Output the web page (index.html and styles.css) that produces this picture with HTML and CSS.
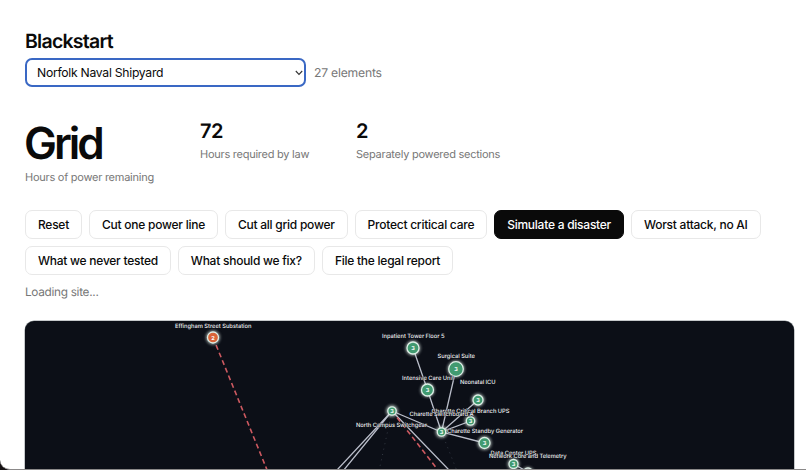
FILE: index.html
```html
<!DOCTYPE html>
<html lang="en">
<head>
  <meta charset="UTF-8" />
  <meta name="viewport" content="width=device-width, initial-scale=1.0"/>
  <title>Blackstart</title>
  <link rel="stylesheet" href="styles.css">
</head>
<body>
  <main class="page">
    <h1>Blackstart</h1>
    <div class="site-row">
      <div class="select-wrap">
        <select class="site-select" aria-label="Site">
          <option>Norfolk Naval Shipyard</option>
        </select>
        <svg class="chevron" viewBox="0 0 8 6"><path d="M.8 1 4 4.400 7.200 1"/></svg>
      </div>
      <span class="count">27 elements</span>
    </div>

    <div class="stats">
      <div class="stat hero">
        <div class="value">Grid</div>
        <div class="label">Hours of power remaining</div>
      </div>
      <div class="stat law">
        <div class="value">72</div>
        <div class="label">Hours required by law</div>
      </div>
      <div class="stat">
        <div class="value">2</div>
        <div class="label">Separately powered sections</div>
      </div>
    </div>

    <div class="actions">
      <button>Reset</button>
      <button>Cut one power line</button>
      <button>Cut all grid power</button>
      <button>Protect critical care</button>
      <button class="primary">Simulate a disaster</button>
      <button>Worst attack, no AI</button>
      <button>What we never tested</button>
      <button>What should we fix?</button>
      <button>File the legal report</button>
    </div>
    <p class="status">Loading site...</p>

    <div class="graph">
      <svg viewBox="25 321 769 149" width="769" height="149">
        <defs>
          <filter id="glow" x="-60%" y="-60%" width="220%" height="220%">
            <feGaussianBlur stdDeviation="1.5"/>
          </filter>
        </defs>
        <g class="link">
          <path d="M413 348 427.500 390 441.500 432 456 369"/>
          <path d="M392 411 441.500 432 478 400"/>
          <path d="M470.500 421 441.500 432 484.500 443"/>
          <path d="M392 411 337 470M392 411 343 471M392 411 449 470"/>
          <path d="M513.500 464 528 472"/>
        </g>
        <path class="cut" d="M213 337.500 267.500 471"/>
        <path class="cut" d="M392 411 438 470"/>
        <path class="dots" d="M392 411 379 471M441.500 432 457 471"/>

        <g class="halo" filter="url(#glow)">
          <circle cx="213" cy="337.500" r="7"/>
          <circle cx="413" cy="348" r="7.500"/>
          <circle cx="456" cy="369" r="8.500"/>
          <circle cx="427.500" cy="390" r="7"/>
          <circle cx="478" cy="400" r="6.500"/>
          <circle cx="392" cy="411" r="6"/>
          <circle cx="470.500" cy="421" r="6"/>
          <circle cx="441.500" cy="432" r="6"/>
          <circle cx="484.500" cy="443" r="7"/>
          <circle cx="513.500" cy="464" r="6"/>
          <circle cx="528" cy="473" r="6"/>
        </g>
        <g class="node">
          <circle class="hit" cx="213" cy="337.500" r="5.500"/>
          <circle cx="413" cy="348" r="6"/>
          <circle cx="456" cy="369" r="7.300"/>
          <circle cx="427.500" cy="390" r="6"/>
          <circle cx="478" cy="400" r="5"/>
          <circle cx="392" cy="411" r="4.200"/>
          <circle cx="470.500" cy="421" r="4.200"/>
          <circle cx="441.500" cy="432" r="4.200"/>
          <circle cx="484.500" cy="443" r="5.500"/>
          <circle cx="513.500" cy="464" r="4.500"/>
          <circle class="idle" cx="528" cy="473" r="5"/>
        </g>
        <g class="num">
          <text x="213" y="339.500">2</text>
          <text x="413" y="350">3</text>
          <text x="456" y="371">3</text>
          <text x="427.500" y="392">3</text>
          <text x="478" y="402">3</text>
          <text x="392" y="413">3</text>
          <text x="470.500" y="423">3</text>
          <text x="441.500" y="434">3</text>
          <text x="484.500" y="445">3</text>
          <text x="513.500" y="466">3</text>
        </g>
        <g class="name">
          <text x="175" y="327.500" textLength="76.500">Effingham Street Substation</text>
          <text x="382" y="337.500" textLength="62.500">Inpatient Tower Floor 5</text>
          <text x="437.500" y="357.500" textLength="37.500">Surgical Suite</text>
          <text x="402" y="379.700" textLength="52">Intensive Care Unit</text>
          <text x="460" y="383.700" textLength="35.500">Neonatal ICU</text>
          <text x="431.500" y="412.700" textLength="78">Charette Critical Branch UPS</text>
          <text x="409.500" y="416" textLength="64">Charette Switchboard A</text>
          <text x="356" y="427" textLength="71">North Campus Switchgear</text>
          <text x="447" y="433.300" textLength="76">Charette Standby Generator</text>
          <text x="490.500" y="455" textLength="46">Data Center UPS</text>
          <text x="489" y="457.700" textLength="77.500">Network Core and Telemetry</text>
        </g>
      </svg>
    </div>
  </main>
</body>
</html>
```
FILE: styles.css
```css
* { box-sizing: border-box; }
html {
  background: #151113;
}
body {
  margin: 0;
  height: 470px;
  overflow: hidden;
  font-family: Inter, "Liberation Sans", sans-serif;
  color: #0a0a0a;
  text-rendering: geometricPrecision;
}
.page {
  height: 470px;
  padding: 29px 12px 0 25px;
  overflow: hidden;
  background: #fff;
  border-bottom: 1px solid #8b8989;
  border-bottom-left-radius: 10px;
}
h1 {
  margin: 0;
  font-size: 19.5px;
  line-height: 24px;
  font-weight: 600;
  letter-spacing: -0.75px;
}
.site-row {
  display: flex;
  align-items: center;
  gap: 8px;
  margin-top: 5px;
}
.select-wrap {
  display: grid;
  align-items: center;
  width: 281px;
}
.select-wrap > * { grid-area: 1 / 1; }
.site-select {
  appearance: none;
  width: 100%;
  height: 29px;
  padding: 0 10px;
  border: 2px solid #3a68c4;
  border-radius: 7px;
  background: #fff;
  color: #0a0a0a;
  font: 400 12.2px Inter, "Liberation Sans", sans-serif;
  letter-spacing: -0.28px;
}
.chevron {
  justify-self: end;
  width: 8px;
  height: 6px;
  margin-right: 3px;
  fill: none;
  stroke: #333;
  stroke-width: 1.1;
  pointer-events: none;
}
.count {
  font-size: 12.2px;
  letter-spacing: -0.22px;
  color: #777;
}
.stats {
  display: flex;
  height: 68px;
  margin-top: 32px;
}
.hero { width: 175px; }
.law { width: 156px; }
.stat .value {
  font-size: 20px;
  line-height: 24px;
  font-weight: 600;
  letter-spacing: -0.4px;
}
.stat .label {
  margin-top: 3px;
  font-size: 11px;
  line-height: 16px;
  letter-spacing: -0.25px;
  color: #777;
}
.hero .value {
  margin-left: -1px;
  font-size: 44px;
  line-height: 49px;
  letter-spacing: -3px;
}
.stat.hero .label { margin-top: 1px; }
.actions {
  display: flex;
  flex-wrap: wrap;
  gap: 7px;
  margin-top: 23px;
}
button {
  height: 29px;
  padding: 0 12px;
  border: 1px solid #e8e8e8;
  border-radius: 7px;
  background: #fff;
  color: #0a0a0a;
  font: 500 12px Inter, "Liberation Sans", sans-serif;
  letter-spacing: -0.25px;
  cursor: pointer;
}
button.primary {
  background: #0a0a0a;
  border-color: #0a0a0a;
  color: #fff;
}
.status {
  margin: 9px 0 0;
  font-size: 11.8px;
  line-height: 16px;
  letter-spacing: -0.3px;
  color: #777;
}
.graph {
  height: 170px;
  margin-top: 21px;
  border-radius: 9px;
  overflow: hidden;
  background: #0c0f17;
  box-shadow: 0 0 0 0.5px #8d9497;
}
.graph svg { display: block; }

/* Graph */
.link {
  fill: none;
  stroke: #b9bdc9;
  stroke-width: 1.3;
}
.cut {
  fill: none;
  stroke: #cd5960;
  stroke-width: 1.6;
  stroke-dasharray: 5 3.2;
}
.dots {
  fill: none;
  stroke: #3a414b;
  stroke-width: 0.9;
  stroke-dasharray: 1 4.5;
}
.halo {
  fill: #dce8e3;
  opacity: 0.7;
}
.node {
  fill: #419a70;
  stroke: #dceee5;
  stroke-width: 1.3;
}
.node .hit { fill: #d96439; }
.node .idle { fill: #858991; }
.num {
  fill: #fff;
  font-size: 5.5px;
  font-weight: 700;
  text-anchor: middle;
}
.name {
  fill: #f0f1f3;
  font-size: 5.8px;
  font-weight: 500;
  stroke: #0c0f17;
  stroke-width: 0.6;
  paint-order: stroke;
}
```
